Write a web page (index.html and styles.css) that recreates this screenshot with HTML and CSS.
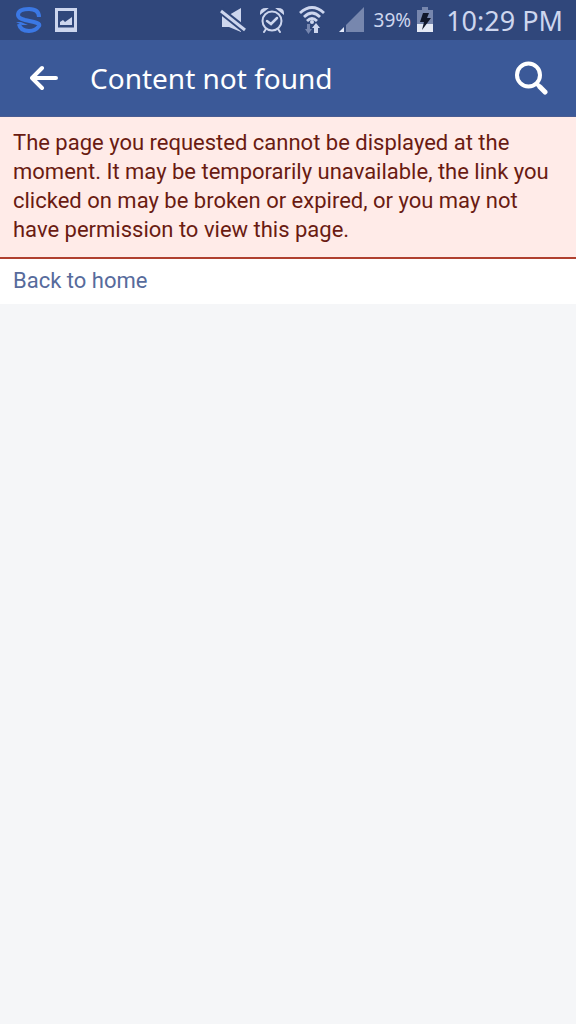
FILE: index.html
```html
<!DOCTYPE html>
<html lang="en">
<head>
    <meta charset="UTF-8">
    <meta name="viewport" content="width=device-width, initial-scale=1">
    <title>Content not found</title>
    <link rel="stylesheet" href="styles.css">
</head>
<body>
    <!-- Phone status bar -->
    <div class="status-bar">
        <div class="notifications">
            <svg width="26" height="26" viewBox="0 0 26 26" fill="none" stroke="#3b78e4" stroke-width="4" stroke-linejoin="round">
                <path d="M23 10C23 4 19 2 13 2C6 2 2 4 2 8C2 11 5 12 9 13L18 15C22 16 24 17 23 19C21 22 18 24 13 24C8 24 4 22 3 17"/>
                <path d="M0 15H5L12 18H6Z" fill="#3b78e4" stroke="none"/>
            </svg>
            <svg width="22" height="24" viewBox="0 0 22 24">
                <path d="M1.5 1.5H20.5V22.5H1.5Z" fill="none" stroke="#cdd6ee" stroke-width="3"/>
                <path d="M5 17V14L8 12L10 14L17 9V17Z" fill="#cdd6ee"/>
                <path d="M2 21.5H20" stroke="#cdd6ee" stroke-width="4"/>
            </svg>
        </div>
        <div class="indicators">
            <svg width="26" height="26" viewBox="0 0 26 26">
                <path d="M2 8H9L21 1V25L9 20H2Z" fill="#cdd6ee"/>
                <path d="M0 3L25 23" stroke="#30477b" stroke-width="7"/>
                <path d="M1 4L25 23" stroke="#cdd6ee" stroke-width="3"/>
            </svg>
            <svg width="26" height="26" viewBox="0 0 26 26" fill="none" stroke="#cdd6ee" stroke-width="2" stroke-linecap="round">
                <circle cx="13" cy="14" r="9.5"/>
                <path d="M8 14L12 17L18 11" stroke-width="2.5"/>
                <path d="M2 6C2 3 4 2 7 2ZM24 6C24 3 22 2 19 2Z" fill="#cdd6ee"/>
                <path d="M7 22L5 25M19 22L21 25"/>
            </svg>
            <svg width="28" height="28" viewBox="0 0 28 28" fill="none" stroke="#cdd6ee" stroke-width="2.8">
                <path d="M2 7Q14 -4 26 7M6 11Q14 3 22 11M9 15Q14 10 19 15"/>
                <circle cx="14" cy="16" r="2" fill="#cdd6ee" stroke="none"/>
                <path d="M9 18H12V23H14L10.5 28L7 23H9Z" fill="#7686af" stroke="none"/>
                <path d="M18 17L22 22H20V27H16V22H14Z" fill="#cdd6ee" stroke="none"/>
            </svg>
            <svg width="26" height="26" viewBox="0 0 26 26">
                <path d="M25 0V25H7V18Z" fill="#7787ae"/>
                <path d="M0 25L5 20V25Z" fill="#e5ebfa"/>
            </svg>
            <span class="battery-level">39%</span>
            <svg width="16" height="26" viewBox="0 0 16 26">
                <path d="M5 0H11V3H16V25H0V3H5Z" fill="#7787ae"/>
                <path d="M0 17H16V25H0Z" fill="#e5eaf5"/>
                <path d="M6 6H12L10 11H14L5 23L7 15H3Z" fill="#10172a"/>
            </svg>
            <time class="clock" datetime="22:29">10:29 PM</time>
        </div>
    </div>

    <header class="header">
        <button class="icon-button" type="button" aria-label="Back">
            <svg width="28" height="26" viewBox="0 0 28 26" fill="none" stroke="currentColor" stroke-width="4" stroke-linecap="round" stroke-linejoin="round">
                <path d="M12 3L2 13L12 23M2 13H26"/>
            </svg>
        </button>
        <h1 class="title">Content not found</h1>
        <button class="icon-button" type="button" aria-label="Search">
            <svg width="34" height="34" viewBox="0 0 34 34" fill="none" stroke="currentColor" stroke-width="4">
                <circle cx="13.5" cy="14" r="11.5"/>
                <path d="M21 22L24 25"/>
                <path d="M25 26L30 31" stroke-width="5" stroke-linecap="round"/>
            </svg>
        </button>
    </header>

    <main>
        <p class="error">The page you requested cannot be displayed at the moment. It may be temporarily unavailable, the link you clicked on may be broken or expired, or you may not have permission to view this page.</p>
        <nav class="links">
            <a href="#">Back to home</a>
        </nav>
    </main>
</body>
</html>
```
FILE: styles.css
```css
:root {
    --status-bg: #30477b;
    --status-color: #cdd6ee;
    --header-bg: #3b5998;
    --page-bg: #f5f6f8;
    --error-bg: #ffebe8;
    --error-border: #b0402f;
    --error-color: #6a1b12;
    --link-color: #576b9c;
}

* {
    box-sizing: border-box;
}

body {
    margin: 0;
    min-height: 100vh;
    background: var(--page-bg);
    font-family: Roboto, sans-serif;
    font-size: 22px;
    line-height: 29px;
}

svg {
    display: block;
    flex-shrink: 0;
}

.status-bar {
    display: flex;
    justify-content: space-between;
    align-items: center;
    height: 40px;
    padding: 0 13px 0 16px;
    background: var(--status-bg);
    color: var(--status-color);
    font-family: "Noto Sans", sans-serif;
}

.notifications,
.indicators {
    display: flex;
    align-items: center;
    gap: 13px;
}

.battery-level {
    margin: 0 -7px 0 -4px;
    font-size: 19px;
}

.clock {
    font-size: 27px;
    white-space: nowrap;
}

.header {
    display: flex;
    align-items: center;
    height: 77px;
    padding: 0 12px;
    background: var(--header-bg);
    border-bottom: 1px solid #4a5c92;
    color: white;
}

.icon-button {
    display: flex;
    justify-content: center;
    align-items: center;
    width: 64px;
    height: 64px;
    padding: 0;
    border: none;
    background: none;
    color: inherit;
    cursor: pointer;
}

.title {
    flex: 1;
    margin: 0 0 0 14px;
    font-family: "Noto Sans", sans-serif;
    font-size: 28px;
    font-weight: normal;
    line-height: 40px;
}

.error {
    margin: 0;
    padding: 11px 13px 13px;
    background: var(--error-bg);
    border-bottom: 2px solid var(--error-border);
    color: var(--error-color);
}

.links {
    padding: 7px 13px 9px;
    background: white;
}

.links a {
    color: var(--link-color);
    text-decoration: none;
}
```
